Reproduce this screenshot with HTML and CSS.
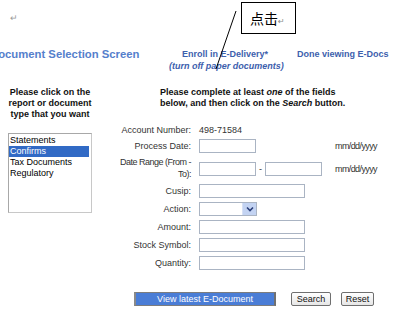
FILE: index.html
```html
<!DOCTYPE html>
<html>
<head>
<meta charset="utf-8">
<link rel="stylesheet" href="styles.css">
</head>
<body>
<div class="page">
  <div class="mark">↵</div>
  <div class="header">
    <div class="title">Document Selection Screen</div>
    <div class="enroll">
      <div>Enroll in E-Delivery*</div>
      <div class="sub">(turn off paper documents)</div>
    </div>
    <div class="done">Done viewing E-Docs</div>
  </div>
  <div class="main">
    <div class="left">
      <p class="instr">Please click on the<br>report or document<br>type that you want</p>
      <div class="listbox">
        <div class="opt">Statements</div>
        <div class="opt sel">Confirms</div>
        <div class="opt">Tax Documents</div>
        <div class="opt">Regulatory</div>
      </div>
    </div>
    <div class="right">
      <p class="instr2">Please complete at least <i>one</i> of the fields<br>below, and then click on the <i>Search</i> button.</p>
      <div class="form">
        <div class="lbl acct">Account Number:</div>
        <div class="val acct">498-71584</div>
        <div class="hint"></div>

        <div class="lbl">Process Date:</div>
        <div class="val"><span class="inp short"></span></div>
        <div class="hint">mm/dd/yyyy</div>

        <div class="lbl two">Date Range (From -<br>To):</div>
        <div class="val"><span class="inp short"></span><span class="dash">-</span><span class="inp short"></span></div>
        <div class="hint">mm/dd/yyyy</div>

        <div class="lbl">Cusip:</div>
        <div class="val"><span class="inp long"></span></div>
        <div class="hint"></div>

        <div class="lbl">Action:</div>
        <div class="val"><span class="sel-box"><span class="drop"><svg width="8" height="6" viewBox="0 0 8 6"><path d="M1 1.5 L4 4.5 L7 1.5" fill="none" stroke="#2b3f7a" stroke-width="1.6"/></svg></span></span></div>
        <div class="hint"></div>

        <div class="lbl">Amount:</div>
        <div class="val"><span class="inp long"></span></div>
        <div class="hint"></div>

        <div class="lbl">Stock Symbol:</div>
        <div class="val"><span class="inp long"></span></div>
        <div class="hint"></div>

        <div class="lbl">Quantity:</div>
        <div class="val"><span class="inp long"></span></div>
        <div class="hint"></div>
      </div>
    </div>
  </div>
  <div class="actions">
    <button class="view">View latest E-Document</button>
    <button class="btn search">Search</button>
    <button class="btn reset">Reset</button>
  </div>
  <div class="callout">点击<span class="ret">↵</span></div>
  <svg class="pointer" width="405" height="80" viewBox="0 0 405 80"><line x1="236" y1="11" x2="216" y2="69" stroke="#000" stroke-width="1"/></svg>
</div>
</body>
</html>
```

FILE: styles.css
```css
html, body {
  margin: 0;
  padding: 0;
  background: #fff;
}
.page {
  position: relative;
  width: 405px;
  height: 320px;
  overflow: hidden;
  font-family: "Liberation Sans", Arial, "Noto Sans CJK SC", sans-serif;
  font-size: 9px;
  color: #333;
}
.mark {
  padding: 13px 0 0 10px;
  line-height: 11px;
  height: 11px;
  color: #9a9a9a;
  font-size: 9px;
}
.header {
  display: flex;
  align-items: flex-start;
  margin-top: 24px;
  height: 24px;
}
.title {
  margin-left: -10px;
  width: 179px;
  flex: none;
  font-size: 11.3px;
  line-height: 12px;
  font-weight: bold;
  color: #5580cc;
  white-space: nowrap;
}
.enroll {
  width: 112px;
  flex: none;
  text-align: center;
  font-weight: bold;
  color: #3d60ad;
  line-height: 12px;
  white-space: nowrap;
}
.enroll .sub {
  font-style: italic;
}
.done {
  margin-left: 16px;
  font-weight: bold;
  color: #3d60ad;
  line-height: 12px;
  white-space: nowrap;
}
.main {
  display: flex;
  margin-top: 15px;
}
.left {
  margin-left: 8px;
  width: 84px;
  flex: none;
}
.instr {
  margin: 0;
  text-align: center;
  font-weight: bold;
  color: #111;
  line-height: 11px;
  white-space: nowrap;
}
.listbox {
  margin-top: 13px;
  height: 80px;
  box-sizing: border-box;
  border: 1px solid #a8a8a8;
  border-right-color: #c8c8c8;
  border-bottom-color: #c8c8c8;
  padding: 1px 1px 0 0;
  color: #000;
}
.opt {
  line-height: 11px;
  height: 11px;
  padding-left: 1px;
  white-space: nowrap;
}
.opt.sel {
  background: #316ac5;
  color: #fff;
  margin-right: 1px;
}
.right {
  margin-left: 19px;
  flex: 1;
}
.instr2 {
  margin: 0;
  padding-left: 49px;
  font-weight: bold;
  color: #111;
  line-height: 11px;
  white-space: nowrap;
}
.form {
  display: grid;
  grid-template-columns: 80px 128px auto;
  column-gap: 8px;
  row-gap: 4px;
  margin-top: 16px;
  align-items: center;
}
.lbl {
  text-align: right;
  white-space: nowrap;
  color: #333;
  line-height: 14px;
}
.lbl.two {
  line-height: 11.5px;
  letter-spacing: -0.5px;
}
.lbl.acct, .val.acct {
  line-height: 10px;
}
.val {
  display: flex;
  align-items: center;
  min-height: 14px;
  color: #333;
}
.val.acct {
  min-height: 10px;
}
.hint {
  color: #333;
  letter-spacing: -0.6px;
  white-space: nowrap;
}
.inp {
  display: block;
  height: 14px;
  box-sizing: border-box;
  border: 1px solid #aab4c3;
  background: #fff;
}
.inp.short {
  width: 57px;
}
.inp.long {
  width: 106px;
}
.dash {
  width: 9px;
  text-align: center;
  color: #333;
  line-height: 14px;
}
.sel-box {
  display: flex;
  justify-content: flex-end;
  width: 58px;
  height: 14px;
  box-sizing: border-box;
  border: 1px solid #aab4c3;
  background: #fff;
}
.drop {
  width: 13px;
  height: 12px;
  background: #c3d3f2;
  border-left: 1px solid #d6e0f5;
  display: flex;
  align-items: center;
  justify-content: center;
}
.actions {
  display: flex;
  align-items: flex-start;
  margin-top: 22px;
  padding-left: 134px;
}
button {
  font-family: "Liberation Sans", Arial, sans-serif;
  font-size: 9px;
  margin: 0;
  padding: 0;
  height: 14px;
  line-height: 12px;
  box-sizing: border-box;
  cursor: pointer;
}
.view {
  width: 142px;
  background: #4a7dd6;
  color: #fff;
  border: 1px solid #7d7d7d;
  border-right: 2px solid #707070;
  border-left: 2px solid #8a8a8a;
}
.btn {
  background: linear-gradient(#ffffff, #e6e6e6);
  color: #111;
  border: 1px solid #6f6f6f;
  border-radius: 2px;
}
.search {
  width: 40px;
  margin-left: 15px;
}
.reset {
  width: 33px;
  margin-left: 10px;
}
.callout {
  position: absolute;
  left: 241px;
  top: 2px;
  width: 55px;
  height: 32px;
  box-sizing: border-box;
  border: 1px solid #000;
  background: #fff;
  padding: 6px 0 0 8px;
  font-family: "Noto Sans CJK SC", sans-serif;
  font-size: 14px;
  line-height: 18px;
  color: #000;
  white-space: nowrap;
}
.callout .ret {
  font-size: 8px;
  color: #888;
  font-family: "DejaVu Sans", sans-serif;
}
.pointer {
  position: absolute;
  left: 0;
  top: 0;
}
```
